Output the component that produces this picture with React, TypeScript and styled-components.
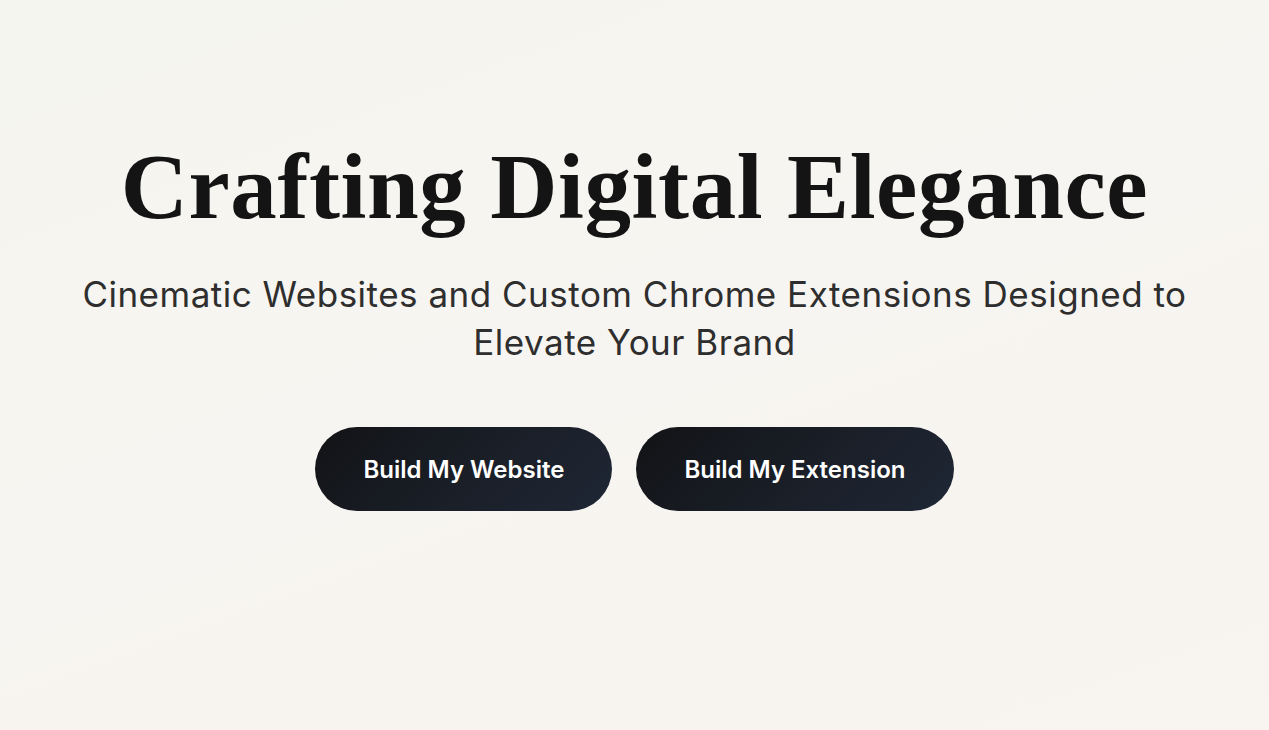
import React from 'react';
import styled, { createGlobalStyle } from 'styled-components';

const GlobalStyle = createGlobalStyle`
  html, body {
    margin: 0;
    padding: 0;
  }
  body {
    background: #f6f5f1;
    font-family: Inter, "Noto Sans", sans-serif;
  }
`;

const Hero = styled.section`
  min-height: 730px;
  box-sizing: border-box;
  display: flex;
  flex-direction: column;
  align-items: center;
  padding-top: 133px;
  background: linear-gradient(160deg, #f5f5f0 0%, #f7f5f1 50%, #f8f4f0 100%);
`;

const Title = styled.h1`
  margin: 0;
  font-family: "Liberation Serif", "DejaVu Serif", serif;
  font-weight: 700;
  font-size: 93px;
  line-height: 107px;
  color: #141414;
  letter-spacing: 0.6px;
  text-align: center;
`;

const Subtitle = styled.p`
  margin: 30px 0 0;
  max-width: 1160px;
  font-family: Inter, "Noto Sans", sans-serif;
  font-weight: 400;
  font-size: 35px;
  line-height: 48px;
  letter-spacing: 0.5px;
  color: #2e2e2e;
  text-align: center;
`;

const Actions = styled.div`
  display: flex;
  gap: 24px;
  margin-top: 61px;
`;

const CtaButton = styled.button`
  height: 84px;
  padding: 0 48px;
  border: none;
  border-radius: 42px;
  background: linear-gradient(135deg, #121316 0%, #1a1f28 55%, #1f2735 100%);
  color: #ffffff;
  font-family: Inter, "Noto Sans", sans-serif;
  font-weight: 600;
  font-size: 24px;
  cursor: pointer;
`;

export default function App() {
  return (
    <>
      <GlobalStyle />
      <Hero>
        <Title>Crafting Digital Elegance</Title>
        <Subtitle>
          Cinematic Websites and Custom Chrome Extensions Designed to Elevate Your Brand
        </Subtitle>
        <Actions>
          <CtaButton>Build My Website</CtaButton>
          <CtaButton>Build My Extension</CtaButton>
        </Actions>
      </Hero>
    </>
  );
}
